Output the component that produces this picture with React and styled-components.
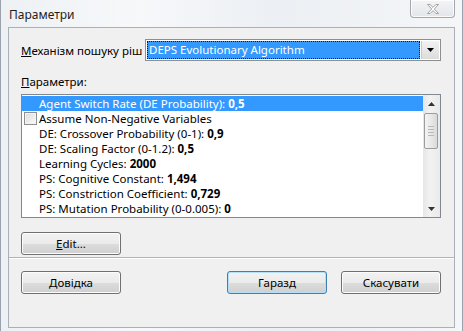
import styled, { createGlobalStyle } from "styled-components";

const GlobalStyle = createGlobalStyle`
  html, body {
    margin: 0;
    padding: 0;
    background: #e9edf1;
  }
  body {
    font-family: "Noto Sans", "Open Sans", sans-serif;
    font-size: 11.5px;
    color: #000;
  }
`;

const params = [
  { label: "Agent Switch Rate (DE Probability): ", value: "0,5", selected: true },
  { label: "Assume Non-Negative Variables", check: true },
  { label: "DE: Crossover Probability (0-1): ", value: "0,9" },
  { label: "DE: Scaling Factor (0-1.2): ", value: "0,5" },
  { label: "Learning Cycles: ", value: "2000" },
  { label: "PS: Cognitive Constant: ", value: "1,494" },
  { label: "PS: Constriction Coefficient: ", value: "0,729" },
  { label: "PS: Mutation Probability (0-0.005): ", value: "0" },
];

const App = () => {
  return (
    <>
      <GlobalStyle />
      <Frame>
        <TitleBar>
          <Title>Параметри</Title>
          <CloseButton>
            <svg width="16" height="12" viewBox="0 0 16 12">
              <path
                d="M2.5 1.5h2.6l2.9 2.9 2.9-2.9h2.6l-4.2 4.5 4.2 4.5h-2.6l-2.9-2.9-2.9 2.9h-2.6l4.2-4.5z"
                fill="#fdfdfd"
                stroke="#9a9a9a"
                strokeWidth="0.9"
                strokeLinejoin="round"
              />
            </svg>
          </CloseButton>
        </TitleBar>
        <Client>
          <Body>
            <SolverRow>
              <Label><u>М</u>еханізм пошуку ріш</Label>
              <Combo>
                <ComboValue>DEPS Evolutionary Algorithm</ComboValue>
                <ComboArrow>
                  <svg width="7" height="4" viewBox="0 0 7 4">
                    <path d="M0 0h7L3.5 4z" fill="#000" />
                  </svg>
                </ComboArrow>
              </Combo>
            </SolverRow>
            <SectionLabel><u>П</u>араметри:</SectionLabel>
            <ListBox>
              <Rows>
                {params.map((p) => (
                  <Row key={p.label} $selected={p.selected}>
                    <CheckSlot>{p.check && <CheckBox />}</CheckSlot>
                    <span>
                      {p.label}
                      {p.value && <b>{p.value}</b>}
                    </span>
                  </Row>
                ))}
              </Rows>
              <ScrollBar>
                <ScrollArrow>
                  <svg width="7" height="4" viewBox="0 0 7 4">
                    <path d="M0 4h7L3.5 0z" fill="#333" />
                  </svg>
                </ScrollArrow>
                <Thumb>
                  <Grip />
                  <Grip />
                  <Grip />
                  <Grip />
                </Thumb>
                <Track />
                <ScrollArrow>
                  <svg width="7" height="4" viewBox="0 0 7 4">
                    <path d="M0 0h7L3.5 4z" fill="#333" />
                  </svg>
                </ScrollArrow>
              </ScrollBar>
            </ListBox>
            <EditRow>
              <Button><u>E</u>dit...</Button>
            </EditRow>
          </Body>
          <Footer>
            <Button><u>Д</u>овідка</Button>
            <Actions>
              <Button $default>Гаразд</Button>
              <Button>Скасувати</Button>
            </Actions>
          </Footer>
        </Client>
      </Frame>
    </>
  );
};

export default App;

const Frame = styled.div`
  box-sizing: border-box;
  width: 463px;
  height: 331px;
  padding: 0 7px 0 7px;
  border: 1px solid #9aa3ad;
  border-top: none;
  border-bottom: none;
  background: linear-gradient(90deg, #eef1f4 0%, #f6f8fa 30%, #eceff3 60%, #f4f6f8 100%);
  display: flex;
  flex-direction: column;
`;

const TitleBar = styled.div`
  height: 27px;
  display: flex;
  justify-content: space-between;
  align-items: flex-start;
`;

const Title = styled.div`
  font-size: 12px;
  padding-top: 6px;
  padding-left: 1px;
  color: #1e1e1e;
`;

const CloseButton = styled.div`
  width: 45px;
  height: 18px;
  box-sizing: border-box;
  border: 1px solid #a4a8ad;
  border-top: none;
  border-radius: 0 0 4px 4px;
  background: linear-gradient(#f3f4f6, #e3e6ea);
  box-shadow: inset 0 0 0 1px rgba(255, 255, 255, 0.8);
  display: flex;
  align-items: center;
  justify-content: center;
`;

const Client = styled.div`
  box-sizing: border-box;
  height: 301px;
  border: 1px solid #a9b0b8;
  background: #f0f0f0;
  display: flex;
  flex-direction: column;
`;

const Body = styled.div`
  flex: 1;
  padding: 11px 13px 0 12px;
  display: flex;
  flex-direction: column;
`;

const SolverRow = styled.div`
  display: flex;
  align-items: center;
  height: 22px;
  justify-content: space-between;
`;

const Label = styled.span`
  white-space: nowrap;
  u {
    text-decoration: underline;
  }
`;

const Combo = styled.div`
  box-sizing: border-box;
  width: 296px;
  height: 22px;
  border: 1px solid #8e8f8f;
  background: #fff;
  display: flex;
  padding: 1px;
`;

const ComboValue = styled.div`
  flex: 1;
  background: #3399ff;
  color: #fff;
  outline: 1px dotted #1a1a1a;
  outline-offset: -1px;
  padding-left: 2px;
  display: flex;
  align-items: center;
  line-height: 1;
`;

const ComboArrow = styled.div`
  width: 17px;
  margin-left: 1px;
  background: linear-gradient(#f2f2f2, #dcdcdc);
  border-left: 1px solid #c9c9c9;
  display: flex;
  align-items: center;
  justify-content: center;
`;

const SectionLabel = styled.div`
  margin-top: 13px;
  height: 15px;
  line-height: 15px;
`;

const ListBox = styled.div`
  margin-top: 5px;
  box-sizing: border-box;
  height: 124px;
  border: 1px solid #828790;
  background: #fff;
  display: flex;
`;

const Rows = styled.div`
  flex: 1;
  display: flex;
  flex-direction: column;
  padding-top: 1px;
`;

const Row = styled.div`
  height: 15px;
  display: flex;
  align-items: center;
  padding-left: 2px;
  white-space: nowrap;
  background: ${(p) => (p.$selected ? "#3399ff" : "transparent")};
  color: ${(p) => (p.$selected ? "#fff" : "#000")};
  b {
    font-weight: 700;
  }
`;

const CheckSlot = styled.div`
  width: 15px;
  height: 13px;
  flex-shrink: 0;
`;

const CheckBox = styled.div`
  box-sizing: border-box;
  width: 13px;
  height: 13px;
  border: 1px solid #8f8f8f;
  background: linear-gradient(135deg, #dcdcdc, #fbfbfb);
  box-shadow: inset 0 0 0 1px #f4f4f4;
`;

const ScrollBar = styled.div`
  width: 17px;
  background: linear-gradient(90deg, #e6e6e6, #f2f2f2 40%, #eaeaea);
  display: flex;
  flex-direction: column;
`;

const ScrollArrow = styled.div`
  height: 17px;
  display: flex;
  align-items: center;
  justify-content: center;
`;

const Thumb = styled.div`
  box-sizing: border-box;
  margin: 1px 2px 0 1px;
  height: 36px;
  border: 1px solid #9c9c9c;
  border-radius: 2px;
  background: linear-gradient(90deg, #f4f4f4, #e8e8e8 50%, #dadada);
  display: flex;
  flex-direction: column;
  align-items: center;
  justify-content: center;
  gap: 2px;
`;

const Grip = styled.div`
  width: 6px;
  height: 1px;
  background: #b8b8b8;
`;

const Track = styled.div`
  flex: 1;
`;

const EditRow = styled.div`
  margin-top: 14px;
  display: flex;
`;

const Button = styled.div`
  box-sizing: border-box;
  width: 100px;
  height: 23px;
  border: 1px solid ${(p) => (p.$default ? "#3c7fb1" : "#707070")};
  border-radius: 3px;
  background: linear-gradient(#f2f2f2 0%, #ebebeb 50%, #dddddd 51%, #cfcfcf 100%);
  box-shadow: inset 0 0 0 1px ${(p) => (p.$default ? "#b5e0f7" : "#fcfcfc")};
  display: flex;
  align-items: center;
  justify-content: center;
  u {
    text-decoration: underline;
  }
`;

const Footer = styled.div`
  height: 56px;
  border-top: 1px solid #b4b4b4;
  box-shadow: inset 0 1px 0 #ffffff;
  padding: 13px 13px 0 12px;
  display: flex;
  justify-content: space-between;
  align-items: flex-start;
`;

const Actions = styled.div`
  display: flex;
  gap: 14px;
`;
